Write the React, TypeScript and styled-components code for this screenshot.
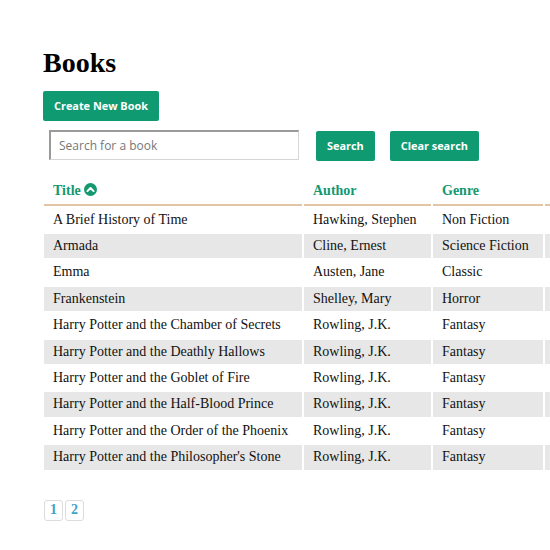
import React from "react";
import styled, { createGlobalStyle } from "styled-components";

const Global = createGlobalStyle`
  html, body { margin: 0; padding: 0; background: #fff; overflow: hidden; }
  body { font-family: "Liberation Serif", "Times New Roman", serif; color: #111; }
`;

const Page = styled.div`
  padding: 47px 0 0 42px;
  width: 508px;
  overflow: hidden;
`;

const Heading = styled.h1`
  margin: 0 0 0 1px;
  font-size: 28px;
  font-weight: 700;
  line-height: 31px;
  color: #000;
`;

const Button = styled.button<{ $ml?: number }>`
  height: 30px;
  padding: 0 11px;
  margin-left: ${(p) => p.$ml ?? 0}px;
  border: none;
  border-radius: 2px;
  background: #0f9a72;
  color: #fff;
  font-family: "Open Sans", "DejaVu Sans", sans-serif;
  font-weight: 700;
  font-size: 10.9px;
  cursor: pointer;
`;

const CreateRow = styled.div`
  margin-top: 12.6px;
  padding-left: 1px;
  display: flex;
`;

const SearchRow = styled.form`
  margin-top: 9px;
  padding-left: 7px;
  display: flex;
  align-items: flex-start;
`;

const SearchInput = styled.input`
  box-sizing: border-box;
  width: 250px;
  height: 30px;
  padding: 0 8px;
  border-style: solid;
  border-width: 2px 1px 1px 2px;
  border-color: #9a9a9a #d6d6d6 #d6d6d6 #9a9a9a;
  font-family: "Open Sans", "DejaVu Sans", sans-serif;
  font-size: 12px;
  outline: none;
  &::placeholder { color: #777; }
`;

const ButtonSlot = styled.div`
  margin-top: 1px;
  display: flex;
`;

const Table = styled.table`
  margin-top: 16.6px;
  border-collapse: separate;
  border-spacing: 2px;
  table-layout: fixed;
  width: 625px;
  font-size: 14px;
`;

const Th = styled.th`
  text-align: left;
  padding: 4px 8px 4px 9px;
  line-height: 16.4px;
  color: #12996f;
  font-weight: 700;
  border-bottom: 2px solid #e2c5a3;
  white-space: nowrap;
`;

const Td = styled.td<{ $shade: boolean }>`
  padding: 4px 8px 4px 9px;
  line-height: 16.4px;
  background: ${(p) => (p.$shade ? "#e7e7e7" : "transparent")};
  white-space: nowrap;
  overflow: hidden;
`;

const SortIcon = styled.svg`
  vertical-align: -1px;
  margin-left: 3px;
`;

const Pager = styled.div`
  margin-top: 28px;
  margin-left: 2px;
  display: flex;
  gap: 2px;
`;

const PageLink = styled.a`
  box-sizing: border-box;
  width: 19px;
  height: 21px;
  border: 1px solid #dcdcdc;
  border-radius: 3px;
  display: flex;
  align-items: center;
  justify-content: center;
  color: #3ea3c9;
  font-weight: 700;
  font-size: 14px;
  text-decoration: none;
`;

const books = [
  ["A Brief History of Time", "Hawking, Stephen", "Non Fiction"],
  ["Armada", "Cline, Ernest", "Science Fiction"],
  ["Emma", "Austen, Jane", "Classic"],
  ["Frankenstein", "Shelley, Mary", "Horror"],
  ["Harry Potter and the Chamber of Secrets", "Rowling, J.K.", "Fantasy"],
  ["Harry Potter and the Deathly Hallows", "Rowling, J.K.", "Fantasy"],
  ["Harry Potter and the Goblet of Fire", "Rowling, J.K.", "Fantasy"],
  ["Harry Potter and the Half-Blood Prince", "Rowling, J.K.", "Fantasy"],
  ["Harry Potter and the Order of the Phoenix", "Rowling, J.K.", "Fantasy"],
  ["Harry Potter and the Philosopher's Stone", "Rowling, J.K.", "Fantasy"],
];

export default function App() {
  return (
    <>
      <Global />
      <Page>
        <Heading>Books</Heading>
        <CreateRow>
          <Button>Create New Book</Button>
        </CreateRow>
        <SearchRow onSubmit={(e) => e.preventDefault()}>
          <SearchInput placeholder="Search for a book" />
          <ButtonSlot>
            <Button $ml={17}>Search</Button>
            <Button $ml={15}>Clear search</Button>
          </ButtonSlot>
        </SearchRow>
        <Table>
          <colgroup>
            <col style={{ width: 258 }} />
            <col style={{ width: 127 }} />
            <col style={{ width: 110 }} />
            <col style={{ width: 120 }} />
          </colgroup>
          <thead>
            <tr>
              <Th>
                Title
                <SortIcon width="13" height="13" viewBox="0 0 16 16">
                  <circle cx="8" cy="8" r="8" fill="#12996f" />
                  <path d="M4.2 10 L8 6.2 L11.8 10" fill="none" stroke="#fff" strokeWidth="2.6" strokeLinecap="round" strokeLinejoin="round" />
                </SortIcon>
              </Th>
              <Th>Author</Th>
              <Th>Genre</Th>
              <Th>{"\u00a0"}</Th>
            </tr>
          </thead>
          <tbody>
            {books.map((b, i) => (
              <tr key={b[0]}>
                <Td $shade={i % 2 === 1}>{b[0]}</Td>
                <Td $shade={i % 2 === 1}>{b[1]}</Td>
                <Td $shade={i % 2 === 1}>{b[2]}</Td>
                <Td $shade={i % 2 === 1}>{"\u00a0"}</Td>
              </tr>
            ))}
          </tbody>
        </Table>
        <Pager>
          <PageLink href="#">1</PageLink>
          <PageLink href="#">2</PageLink>
        </Pager>
      </Page>
    </>
  );
}
